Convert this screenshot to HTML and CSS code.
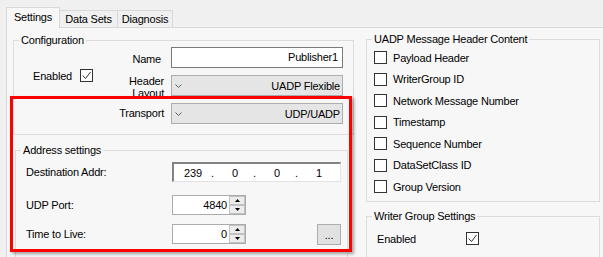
FILE: index.html
```html
<!DOCTYPE html>
<html lang="en">
<head>
    <meta charset="UTF-8">
    <meta name="viewport" content="width=device-width, initial-scale=1.0">
    <title>Publisher Settings</title>
    <link rel="stylesheet" href="styles.css">
</head>
<body>
    <div class="window">
        <div class="tabs">
            <div class="tab tab-active">Settings</div>
            <div class="tab tab-datasets">Data Sets</div>
            <div class="tab tab-diagnosis">Diagnosis</div>
        </div>
        <div class="page">
            <div class="col-left">
                <fieldset class="group config">
                    <legend>Configuration</legend>
                    <div class="config-grid">
                        <div class="enabled">
                            <span>Enabled</span>
                            <span class="checkbox"><svg width="11" height="11" viewBox="0 0 11 11"><polyline points="1.5,5.5 4.5,8.5 9.5,2" fill="none" stroke="#333" stroke-width="1"/></svg></span>
                        </div>
                        <div class="label label-name">Name</div>
                        <div class="textbox">Publisher1</div>
                        <div class="label label-layout">Header<br>Layout</div>
                        <div class="combo">
                            <svg width="7" height="4" viewBox="0 0 7 4"><polyline points="0.5,0.5 3.5,3.5 6.5,0.5" fill="none" stroke="#606060" stroke-width="1"/></svg>
                            <span>UADP Flexible</span>
                        </div>
                        <div class="label label-transport">Transport</div>
                        <div class="combo">
                            <svg width="7" height="4" viewBox="0 0 7 4"><polyline points="0.5,0.5 3.5,3.5 6.5,0.5" fill="none" stroke="#606060" stroke-width="1"/></svg>
                            <span>UDP/UADP</span>
                        </div>
                    </div>
                </fieldset>
                <fieldset class="group address">
                    <legend>Address settings</legend>
                    <div class="address-grid">
                        <div class="label-left">Destination Addr:</div>
                        <div class="ipbox">
                            <span class="octet">239</span><span class="dot">.</span>
                            <span class="octet">0</span><span class="dot">.</span>
                            <span class="octet">0</span><span class="dot">.</span>
                            <span class="octet">1</span>
                        </div>
                        <div class="label-left">UDP Port:</div>
                        <div class="numeric">
                            <span class="num-value">4840</span>
                            <span class="spin">
                                <span class="spin-btn"><svg width="5" height="3" viewBox="0 0 5 3"><polygon points="0,3 2.5,0 5,3" fill="#000"/></svg></span>
                                <span class="spin-btn"><svg width="5" height="3" viewBox="0 0 5 3"><polygon points="0,0 2.5,3 5,0" fill="#000"/></svg></span>
                            </span>
                        </div>
                        <div class="label-left">Time to Live:</div>
                        <div class="ttl-row">
                            <div class="numeric">
                                <span class="num-value">0</span>
                                <span class="spin">
                                    <span class="spin-btn"><svg width="5" height="3" viewBox="0 0 5 3"><polygon points="0,3 2.5,0 5,3" fill="#000"/></svg></span>
                                    <span class="spin-btn"><svg width="5" height="3" viewBox="0 0 5 3"><polygon points="0,0 2.5,3 5,0" fill="#000"/></svg></span>
                                </span>
                            </div>
                            <div class="btn-more">...</div>
                        </div>
                    </div>
                </fieldset>
            </div>
            <div class="col-right">
                <fieldset class="group header-content">
                    <legend>UADP Message Header Content</legend>
                    <div class="check-list">
                        <div class="check-row"><span class="checkbox"></span>Payload Header</div>
                        <div class="check-row"><span class="checkbox"></span>WriterGroup ID</div>
                        <div class="check-row"><span class="checkbox"></span>Network Message Number</div>
                        <div class="check-row"><span class="checkbox"></span>Timestamp</div>
                        <div class="check-row"><span class="checkbox"></span>Sequence Number</div>
                        <div class="check-row"><span class="checkbox"></span>DataSetClass ID</div>
                        <div class="check-row"><span class="checkbox"></span>Group Version</div>
                    </div>
                </fieldset>
                <fieldset class="group writer">
                    <legend>Writer Group Settings</legend>
                    <div class="writer-row">
                        <span class="writer-label">Enabled</span>
                        <span class="checkbox"><svg width="11" height="11" viewBox="0 0 11 11"><polyline points="1.5,5.5 4.5,8.5 9.5,2" fill="none" stroke="#333" stroke-width="1"/></svg></span>
                    </div>
                </fieldset>
            </div>
        </div>
        <div class="highlight"></div>
    </div>
</body>
</html>
```

FILE: styles.css
```css
body, html{
    margin: 0;
    background-color: #f0f0f0;
}
body{
    font-family: "Liberation Sans", Arial, sans-serif;
    font-size: 11px;
    letter-spacing: -0.2px;
    color: #000;
}
.window{
    position: relative;
    height: 257px;
    padding-left: 6px;
    overflow: hidden;
}

/* tab strip */
.tabs{
    display: flex;
    align-items: flex-end;
    height: 28px;
    box-sizing: border-box;
    border-bottom: 1px solid #d9d9d9;
}
.tab{
    box-sizing: border-box;
    height: 17px;
    padding-top: 1px;
    line-height: 14px;
    text-align: center;
    background-color: #f0f0f0;
    border: 1px solid #d9d9d9;
    border-left: none;
    border-bottom: none;
}
.tab-active{
    width: 54px;
    height: 21px;
    padding-top: 2px;
    margin-bottom: -1px;
    border-left: 1px solid #d9d9d9;
    background-color: #f7f7f7;
}
.tab-datasets{
    width: 58px;
}
.tab-diagnosis{
    width: 55px;
}

.page{
    display: flex;
    gap: 12px;
    height: 229px;
    box-sizing: border-box;
    padding: 5px 0 0 6px;
    border-left: 1px solid #d9d9d9;
    background-color: #f7f7f7;
}
.col-left{
    width: 341px;
    flex-shrink: 0;
    padding-top: 1px;
}
.col-right{
    width: 234px;
    flex-shrink: 0;
}

/* group boxes */
.group{
    margin: 0;
    padding: 0;
    min-width: 0;
    border: 1px solid #dcdcdc;
}
.group legend{
    padding: 0 2px;
    margin-left: 5px;
    line-height: 13px;
}

.config-grid{
    display: grid;
    grid-template-columns: 79px 64px 172px;
    grid-template-rows: 21px 21px 21px;
    column-gap: 7px;
    row-gap: 7px;
    padding: 0 10px 10px 0;
}
.enabled{
    grid-column: 1;
    grid-row: 1 / 3;
    display: flex;
    align-items: center;
    gap: 8px;
    height: 13px;
    padding: 22px 0 0 19px;
}
.label{
    grid-column: 2;
    text-align: right;
}
.label-name{
    padding: 6px 3px 0 0;
    line-height: 13px;
}
.label-layout{
    line-height: 12px;
}
.label-transport{
    line-height: 21px;
}
.textbox{
    box-sizing: border-box;
    background-color: #fff;
    border: 1px solid #7a7a7a;
    text-align: right;
    padding-right: 4px;
    line-height: 19px;
}
.combo{
    box-sizing: border-box;
    display: flex;
    align-items: center;
    background-color: #e5e5e5;
    border: 1px solid #adadad;
    padding: 0 2px 0 3px;
}
.combo span{
    margin-left: auto;
}

.checkbox{
    box-sizing: border-box;
    display: inline-flex;
    width: 13px;
    height: 13px;
    flex-shrink: 0;
    border: 1px solid #333;
    background-color: #fff;
}

.address{
    width: 333px;
    box-sizing: border-box;
    margin: 9px 0 0 2px;
}
.address-grid{
    display: grid;
    grid-template-columns: 146px 169px;
    grid-template-rows: 33px 29px 20px;
    align-items: start;
    padding: 5px 0 20px 10px;
}
.label-left{
    line-height: 20px;
}
.ipbox{
    box-sizing: border-box;
    display: flex;
    align-items: center;
    height: 20px;
    padding-left: 7px;
    background-color: #fff;
    border-top: 2px solid #838383;
    border-left: 2px solid #838383;
    border-right: 1px solid #e3e3e3;
    border-bottom: 1px solid #e3e3e3;
}
.octet{
    width: 24px;
    text-align: center;
}
.dot{
    width: 12px;
    padding-left: 6px;
}
.numeric{
    box-sizing: border-box;
    display: flex;
    align-items: center;
    justify-content: flex-end;
    width: 74px;
    height: 20px;
    background-color: #fff;
    border: 1px solid #ababab;
}
.num-value{
    padding-right: 2px;
}
.spin{
    display: flex;
    flex-direction: column;
    width: 16px;
    height: 18px;
}
.spin-btn{
    flex: 1;
    display: flex;
    align-items: center;
    justify-content: center;
    box-sizing: border-box;
    background-color: #ececec;
    border: 1px solid #c2c2c2;
}
.ttl-row{
    display: flex;
    justify-content: space-between;
    align-items: flex-start;
}
.btn-more{
    box-sizing: border-box;
    width: 24px;
    height: 21px;
    display: flex;
    align-items: flex-end;
    justify-content: center;
    padding-bottom: 3px;
    line-height: 11px;
    background-color: #e1e1e1;
    border: 1px solid #adadad;
}

.check-list{
    padding: 1px 0 3px 7px;
}
.check-row{
    display: flex;
    align-items: center;
    gap: 6px;
    height: 21.5px;
}
.writer{
    margin-top: 8px;
}
.writer-row{
    display: flex;
    align-items: center;
    height: 20px;
    padding: 6px 0 20px 10px;
}
.writer-label{
    width: 89px;
}

/* red annotation frame drawn over the form */
.highlight{
    position: absolute;
    left: 10px;
    top: 96px;
    width: 342px;
    height: 156px;
    box-sizing: border-box;
    border: 3px solid #f00;
    box-shadow: 2px 2px 3px rgba(0, 0, 0, 0.35);
}
```
